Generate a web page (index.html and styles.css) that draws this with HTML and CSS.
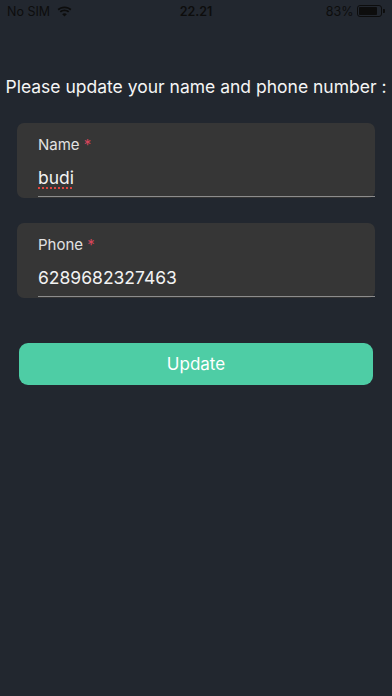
FILE: index.html
```html
<!DOCTYPE html>
<html lang="en">
<head>
    <meta charset="UTF-8">
    <meta name="viewport" content="width=device-width, initial-scale=1.0">
    <title>Update Profile</title>
    <link rel="stylesheet" href="styles.css">
</head>
<body>
    <div class="status-bar">
        <div class="status-left">
            <span>No SIM</span>
            <svg class="wifi" width="15" height="11" viewBox="0 0 15 11">
                <path d="M7.5 2.2c2.2 0 4.2.8 5.7 2.2l1.2-1.3C12.6 1.4 10.2.4 7.5.4S2.4 1.4.6 3.1l1.2 1.3c1.5-1.4 3.5-2.2 5.7-2.2z" fill="#0d0d0d"/>
                <path d="M7.5 5.2c1.4 0 2.6.5 3.6 1.4l1.2-1.3C11 4.1 9.3 3.4 7.5 3.4S4 4.1 2.7 5.3l1.2 1.3c1-.9 2.2-1.4 3.6-1.4z" fill="#0d0d0d"/>
                <path d="M7.5 10.6l2.3-2.4c-.6-.6-1.4-.9-2.3-.9s-1.7.3-2.3.9z" fill="#0d0d0d"/>
            </svg>
        </div>
        <div class="status-time">22.21</div>
        <div class="status-right">
            <span>83%</span>
            <div class="battery"><div class="battery-level"></div></div>
            <div class="battery-nub"></div>
        </div>
    </div>

    <h1 class="title">Please update your name and phone number :</h1>

    <form class="profile-form">
        <div class="field">
            <label>Name <span class="req">*</span></label>
            <div class="value"><span class="misspelled">budi</span></div>
        </div>
        <div class="field">
            <label>Phone <span class="req">*</span></label>
            <div class="value">6289682327463</div>
        </div>
        <button type="button" class="btn-update">Update</button>
    </form>
</body>
</html>
```

FILE: styles.css
```css
body {
    margin: 0;
    background-color: #22272f;
    font-family: Inter, "Noto Sans", sans-serif;
    color: #f2f2f2;
    height: 696px;
}

.status-bar {
    display: flex;
    align-items: center;
    justify-content: space-between;
    height: 22px;
    padding: 0 7px;
    font-size: 12.5px;
    color: #0d0d0d;
}

.status-left,
.status-right {
    display: flex;
    align-items: center;
    width: 90px;
}

.status-left .wifi {
    margin-left: 7px;
}

.status-right {
    justify-content: flex-end;
}

.status-time {
    font-weight: 600;
}

.battery {
    width: 21px;
    height: 8px;
    margin-left: 4px;
    border: 1px solid #0d0d0d;
    border-radius: 3px;
    padding: 1px;
}

.battery-level {
    width: 83%;
    height: 100%;
    background-color: #0d0d0d;
    border-radius: 1px;
}

.battery-nub {
    width: 1.5px;
    height: 4px;
    margin-left: 1px;
    background-color: #0d0d0d;
    border-radius: 0 1px 1px 0;
}

.title {
    margin: 54px 0 0;
    text-align: center;
    font-size: 17.5px;
    font-weight: 400;
    color: #f5f5f5;
}

.profile-form {
    margin-top: 26px;
    padding: 0 17px;
}

.field {
    height: 75px;
    margin-bottom: 25px;
    background-color: #363636;
    border-radius: 7px;
    box-sizing: border-box;
    padding: 12px 0 0 21px;
    position: relative;
}

.field::after {
    content: "";
    position: absolute;
    left: 21px;
    right: 0;
    bottom: 1px;
    height: 1px;
    background-color: #8c8c8c;
}

.field label {
    display: block;
    font-size: 15px;
    color: #e2e2e2;
}

.req {
    color: #d8455b;
}

.value {
    margin-top: 13px;
    font-size: 17.5px;
    color: #f2f2f2;
}

.misspelled {
    text-decoration: underline dotted #e0453f;
    text-decoration-thickness: 2px;
    text-underline-offset: 3px;
}

.btn-update {
    display: block;
    width: 354px;
    height: 42px;
    margin: 45px 0 0 2px;
    border: none;
    border-radius: 9px;
    background-color: #4ecda5;
    color: #ffffff;
    font-family: inherit;
    font-size: 17px;
}
```
